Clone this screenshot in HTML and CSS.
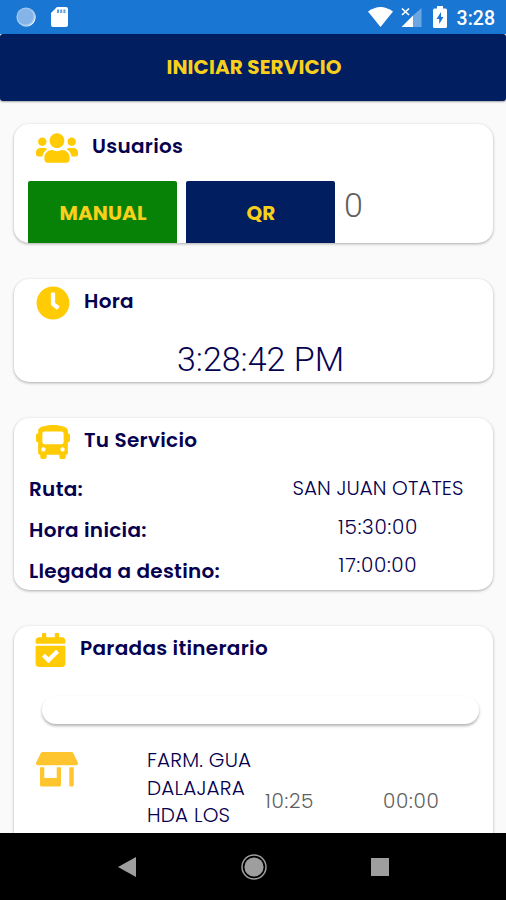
FILE: index.html
```html
<!DOCTYPE html>
<html lang="es">
<head>
  <meta charset="UTF-8">
  <title>Iniciar servicio</title>
  <link rel="stylesheet" href="styles.css">
</head>
<body>
  <div class="status-bar">
    <svg width="20" height="20" viewBox="0 0 20 20">
      <circle cx="10" cy="10" r="9.6" fill="#a9ccf0"/>
      <path d="M17.500 4a9.600 9.600 0 0 1-11 14.900A10 10 0 0 0 17.500 4z" fill="#fff"/>
      <circle cx="9.500" cy="9.500" r="8" fill="#84b4e8"/>
    </svg>
    <svg class="status-sd" width="17" height="20" viewBox="0 0 17 20">
      <path d="M6 0h9a2 2 0 0 1 2 2v16a2 2 0 0 1-2 2H2a2 2 0 0 1-2-2V6z" fill="#fff"/>
      <path d="M6 2.500h2v3.500H6zM9.200 2.500h2v3.500h-2zM12.400 2.500h2v3.500h-2z" fill="#5c9fe0"/>
    </svg>
    <span class="spacer"></span>
    <svg width="25" height="20" viewBox="0 0 25 20">
      <path d="M0 4.500Q12.500-4.500 25 4.500L12.500 20z" fill="#fff"/>
    </svg>
    <svg class="status-signal" width="21" height="20" viewBox="0 0 21 20">
      <path d="M12 8.500L20.500 1v19H12z" fill="#6ba6e3"/>
      <path d="M12 8.500V20H.5z" fill="#fff"/>
      <path d="M1 1.500l7 6.500M8 1.500L1 8" stroke="#fff" stroke-width="1.700"/>
    </svg>
    <svg class="status-battery" width="14" height="22" viewBox="0 0 14 22">
      <path d="M4 0h6v2.500h2.500A1.500 1.500 0 0 1 14 4v16.500a1.500 1.500 0 0 1-1.500 1.500h-11A1.500 1.500 0 0 1 0 20.500V4a1.500 1.500 0 0 1 1.500-1.500H4z" fill="#fff"/>
      <path d="M8 6L3.500 13h2.700v5L10.500 11H8z" fill="#1976d2"/>
    </svg>
    <span class="status-time">3:28</span>
  </div>

  <button class="start-button">INICIAR SERVICIO</button>

  <main class="content">
    <section class="card card-users">
      <div class="card-head">
        <svg width="42" height="34" viewBox="0 0 640 512">
          <path d="M96 224c35.300 0 64-28.700 64-64s-28.700-64-64-64-64 28.700-64 64 28.700 64 64 64zm448 0c35.300 0 64-28.700 64-64s-28.700-64-64-64-64 28.700-64 64 28.700 64 64 64zm32 32h-64c-17.600 0-33.500 7.100-45.100 18.600 40.300 22.100 68.900 62 75.100 109.400h66c17.700 0 32-14.300 32-32v-32c0-35.300-28.700-64-64-64zm-256 0c61.900 0 112-50.100 112-112S381.900 32 320 32 208 82.100 208 144s50.100 112 112 112zm76.800 32h-8.300c-20.800 10-43.900 16-68.500 16s-47.600-6-68.500-16h-8.300C179.600 288 128 339.600 128 403.200V432c0 26.500 21.500 48 48 48h288c26.500 0 48-21.500 48-48v-28.800c0-63.600-51.600-115.200-115.200-115.200zm-223.700-13.400C161.500 263.100 145.600 256 128 256H64c-35.300 0-64 28.700-64 64v32c0 17.700 14.300 32 32 32h65.900c6.300-47.400 34.900-87.300 75.200-109.400z"/>
        </svg>
        <h2 class="card-title">Usuarios</h2>
      </div>
      <div class="user-actions">
        <button class="action action-manual">MANUAL</button>
        <button class="action action-qr">QR</button>
        <span class="user-count">0</span>
      </div>
    </section>

    <section class="card card-time">
      <div class="card-head">
        <svg width="34" height="34" viewBox="0 0 512 512">
          <path d="M256 8C119 8 8 119 8 256s111 248 248 248 248-111 248-248S393 8 256 8zm92.490 313l-20 25a16 16 0 0 1-22.490 2.500l-67-49.720a40 40 0 0 1-15-31.230V112a16 16 0 0 1 16-16h32a16 16 0 0 1 16 16v144l58 42.500a16 16 0 0 1 2.490 22.500z"/>
        </svg>
        <h2 class="card-title">Hora</h2>
      </div>
      <div class="clock">3:28:42 PM</div>
    </section>

    <section class="card card-service">
      <div class="card-head">
        <svg width="34" height="34" viewBox="0 0 512 512">
          <path d="M488 128h-8V80c0-44.800-99.200-80-224-80S32 35.200 32 80v48h-8c-13.250 0-24 10.740-24 24v80c0 13.250 10.750 24 24 24h8v160c0 17.670 14.330 32 32 32v32c0 17.670 14.330 32 32 32h32c17.670 0 32-14.330 32-32v-32h192v32c0 17.670 14.330 32 32 32h32c17.670 0 32-14.330 32-32v-32h6.400c16 0 25.600-12.800 25.600-25.600V256h8c13.250 0 24-10.750 24-24v-80c0-13.260-10.750-24-24-24zM112 400c-17.670 0-32-14.330-32-32s14.330-32 32-32 32 14.330 32 32-14.330 32-32 32zm16-112c-17.670 0-32-14.330-32-32V128c0-17.670 14.330-32 32-32h256c17.670 0 32 14.330 32 32v128c0 17.670-14.330 32-32 32H128zm272 112c-17.670 0-32-14.330-32-32s14.330-32 32-32 32 14.330 32 32-14.330 32-32 32z"/>
        </svg>
        <h2 class="card-title">Tu Servicio</h2>
      </div>
      <div class="service">
        <div class="service-labels">
          <span>Ruta:</span>
          <span>Hora inicia:</span>
          <span>Llegada a destino:</span>
        </div>
        <div class="service-values">
          <span>SAN JUAN OTATES</span>
          <span class="service-hour">15:30:00</span>
          <span class="service-hour">17:00:00</span>
        </div>
      </div>
    </section>

    <section class="card card-stops">
      <div class="card-head">
        <svg class="icon-calendar" width="31" height="34" viewBox="0 0 448 512">
          <path d="M436 160H12c-6.627 0-12-5.373-12-12v-36c0-26.510 21.490-48 48-48h48V12c0-6.627 5.373-12 12-12h40c6.627 0 12 5.373 12 12v52h128V12c0-6.627 5.373-12 12-12h40c6.627 0 12 5.373 12 12v52h48c26.510 0 48 21.490 48 48v36c0 6.627-5.373 12-12 12zM12 192h424c6.627 0 12 5.373 12 12v260c0 26.510-21.490 48-48 48H48c-26.510 0-48-21.490-48-48V204c0-6.627 5.373-12 12-12zm333.296 95.947l-28.169-28.398c-4.667-4.705-12.265-4.736-16.970-.068L194.120 364.665l-45.980-46.352c-4.667-4.705-12.266-4.736-16.971-.068l-28.397 28.170c-4.705 4.667-4.736 12.265-.068 16.970l82.601 83.269c4.667 4.705 12.265 4.736 16.970.068l142.953-141.805c4.705-4.667 4.736-12.265.068-16.970z"/>
        </svg>
        <h2 class="card-title">Paradas itinerario</h2>
      </div>
      <div class="stops-bar"></div>
      <div class="stop">
        <svg class="icon-store" width="42" height="35" viewBox="0 0 42 35">
          <path d="M6.500 0h29a2 2 0 0 1 1.700 1L41.700 10.300c.8 1.600-.2 2.900-1.700 2.900H2C.5 13.200-.5 11.900.3 10.300L4.800 1a2 2 0 0 1 1.700-1z"/>
          <path d="M4 15.300h4.300V26h12.400V15.300H25V33a1.500 1.500 0 0 1-1.500 1.500h-18A1.500 1.500 0 0 1 4 33zM33.300 15.300h4.400V33a1.500 1.500 0 0 1-1.500 1.500h-1.400a1.500 1.500 0 0 1-1.500-1.500z"/>
        </svg>
        <p class="stop-name">FARM. GUA<br>DALAJARA<br>HDA LOS</p>
        <span class="stop-time">10:25</span>
        <span class="stop-time">00:00</span>
      </div>
    </section>
  </main>

  <nav class="nav-bar">
    <svg width="18" height="20" viewBox="0 0 18 20"><path d="M18 0v20L0 10z"/></svg>
    <svg width="26" height="26" viewBox="0 0 26 26">
      <circle cx="13" cy="13" r="12" class="nav-ring"/>
      <circle cx="13" cy="13" r="9.600"/>
    </svg>
    <svg width="18" height="18" viewBox="0 0 18 18"><path d="M0 0h18v18H0z"/></svg>
  </nav>
</body>
</html>
```
FILE: styles.css
```css
:root {
  --navy: #001e60;
  --text: #05004f;
  --yellow: #ffcb05;
  --gray: #5f5f5f;
}

* {
  box-sizing: border-box;
}

body {
  margin: 0;
  height: 900px;
  display: flex;
  flex-direction: column;
  overflow: hidden;
  background-color: #fafafa;
  color: var(--text);
  font-family: Poppins, Inter, sans-serif;
}

svg {
  display: block;
  flex: none;
}

button {
  border: none;
  padding: 0;
  font-family: inherit;
  font-weight: 700;
  font-size: 20px;
  letter-spacing: 0.1px;
  color: #f8d01c;
  cursor: pointer;
}

span {
  white-space: nowrap;
}

/* status bar */
.status-bar {
  flex: none;
  height: 34px;
  padding: 0 11px 0 16px;
  display: flex;
  align-items: center;
  background-color: #1976d2;
}

.status-sd {
  margin-left: 15px;
}

.spacer {
  flex: 1;
}

.status-signal {
  margin-left: 8px;
}

.status-battery {
  margin: 0 10px 0 11px;
}

.status-time {
  font-family: Roboto, sans-serif;
  font-weight: 500;
  font-size: 19.5px;
  line-height: 34px;
  padding-top: 3px;
  color: #fff;
}

.start-button {
  flex: none;
  height: 67px;
  padding: 0 0 2px 2px;
  border-radius: 3px;
  background-color: var(--navy);
  box-shadow: 0 1px 2px rgba(0, 0, 0, 0.35);
}

/* cards */
.content {
  flex: 1;
  min-height: 0;
  overflow: hidden;
  padding: 23px 13px 0 14px;
  display: flex;
  flex-direction: column;
  gap: 36px;
}

.card {
  flex: none;
  border-radius: 15px;
  background-color: #fff;
  box-shadow: 0 1px 3px rgba(0, 0, 0, 0.32);
}

.card-users {
  height: 119px;
  overflow: hidden;
}

.card-time {
  height: 103px;
}

.card-service {
  height: 172px;
}

.card-stops {
  height: 260px;
}

.card-head {
  display: flex;
  gap: 14px;
  height: 57px;
  padding: 7px 0 0 22px;
}

.card-head svg {
  fill: var(--yellow);
}

.icon-calendar {
  margin-left: -1px;
}

.card-title {
  margin: 0;
  font-size: 20px;
  font-weight: 600;
  letter-spacing: 0.3px;
  line-height: 30px;
}

.user-actions {
  display: flex;
  padding-left: 14px;
  gap: 9px;
}

.action {
  width: 149px;
  height: 64px;
  padding-left: 1px;
  border-radius: 2px;
}

.action-manual {
  background-color: #078207;
}

.action-qr {
  background-color: var(--navy);
}

.user-count {
  font-family: Roboto, sans-serif;
  font-size: 34px;
  font-weight: 300;
  line-height: 48px;
  color: var(--gray);
}

.clock {
  text-align: center;
  margin-left: 14px;
  font-family: Roboto, sans-serif;
  font-size: 34px;
  font-weight: 300;
  line-height: 47px;
}

.service {
  display: flex;
  padding-left: 15px;
}

.service-labels {
  flex: none;
  width: 234px;
  margin-top: -6px;
  display: flex;
  flex-direction: column;
  font-size: 20px;
  font-weight: 600;
  letter-spacing: 0.3px;
  line-height: 41px;
}

.service-values {
  flex: 1;
  margin-top: -6px;
  display: flex;
  flex-direction: column;
  align-items: center;
  font-size: 20px;
  font-weight: 300;
  letter-spacing: 0.05px;
  line-height: 38.5px;
}

.service-hour {
  letter-spacing: 0.7px;
}

.stops-bar {
  height: 28px;
  margin: 13px 14px 0 28px;
  border-radius: 14px;
  background-color: #fff;
  box-shadow: 0 2px 3px rgba(0, 0, 0, 0.3);
}

.stop {
  display: flex;
  padding: 22px 0 0 22px;
}

.icon-store {
  fill: #fec52e;
  margin-top: 6px;
}

.stop-name {
  flex: none;
  width: 118px;
  margin: 1px 0 0 69px;
  font-size: 20px;
  font-weight: 300;
  letter-spacing: 0.2px;
  line-height: 27.7px;
  white-space: nowrap;
}

.stop-time {
  flex: none;
  width: 118px;
  margin-top: 41px;
  font-size: 20px;
  font-weight: 300;
  letter-spacing: 0.7px;
  line-height: 28px;
  color: var(--gray);
}

/* navigation */
.nav-bar {
  flex: none;
  height: 67px;
  display: flex;
  justify-content: space-between;
  align-items: center;
  padding: 0 117px 0 118px;
  background-color: #000;
  fill: #9e9e9e;
}

.nav-ring {
  fill: none;
  stroke: #9e9e9e;
  stroke-width: 1.5;
}
```
